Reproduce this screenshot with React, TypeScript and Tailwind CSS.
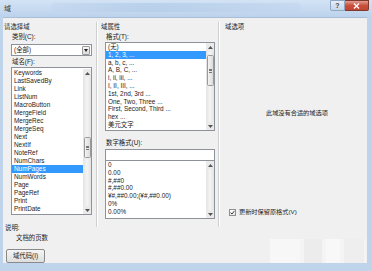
import React from "react";

const fieldNames = [
  "Keywords",
  "LastSavedBy",
  "Link",
  "ListNum",
  "MacroButton",
  "MergeField",
  "MergeRec",
  "MergeSeq",
  "Next",
  "NextIf",
  "NoteRef",
  "NumChars",
  "NumPages",
  "NumWords",
  "Page",
  "PageRef",
  "Print",
  "PrintDate",
];

const formats = [
  "(无)",
  "1, 2, 3, ...",
  "a, b, c, ...",
  "A, B, C, ...",
  "i, ii, iii, ...",
  "I, II, III, ...",
  "1st, 2nd, 3rd ...",
  "One, Two, Three ...",
  "First, Second, Third ...",
  "hex ...",
  "美元文字",
];

const numberFormats = ["0", "0.00", "#,##0", "#,##0.00", "¥#,##0.00;(¥#,##0.00)", "0%", "0.00%"];

function Arrow({ up }: { up?: boolean }) {
  return (
    <div className="flex h-[8px] items-center justify-center">
      <svg width="5" height="3" viewBox="0 0 5 3">
        {up ? <path d="M0 3 L2.5 0 L5 3 Z" fill="#555" /> : <path d="M0 0 L2.5 3 L5 0 Z" fill="#555" />}
      </svg>
    </div>
  );
}

// thin win7 style scrollbar, thumb placed by margin inside the track
function ScrollBar({ thumbTop, thumbHeight }: { thumbTop?: number; thumbHeight?: number }) {
  return (
    <div className="flex w-[8px] shrink-0 flex-col bg-[#eaeaea]">
      <Arrow up />
      <div className="flex-1 bg-[linear-gradient(90deg,#e3e3e3,#f4f4f4_50%,#e3e3e3)] px-[0.5px]">
        {thumbHeight ? (
          <div
            className="flex flex-col items-center justify-center gap-[1px] rounded-[1.5px] border border-[#9a9a9a] bg-[linear-gradient(90deg,#f3f3f3,#dcdcdc)]"
            style={{ marginTop: thumbTop, height: thumbHeight }}
          >
            <div className="h-[0.5px] w-[3px] bg-[#777]" />
            <div className="h-[0.5px] w-[3px] bg-[#777]" />
            <div className="h-[0.5px] w-[3px] bg-[#777]" />
          </div>
        ) : null}
      </div>
      <Arrow />
    </div>
  );
}

function ListBox({
  items,
  selected,
  className,
  thumbTop,
  thumbHeight,
  lineClass,
}: {
  items: string[];
  selected?: number;
  className: string;
  thumbTop?: number;
  thumbHeight?: number;
  lineClass: string;
}) {
  return (
    <div className={`flex overflow-hidden border border-[#8e939b] bg-white ${className}`}>
      <ul className="min-w-0 flex-1 overflow-hidden">
        {items.map((item, i) => (
          <li
            key={item}
            className={`${lineClass} truncate px-[2px] ${i === selected ? "bg-[#3399ff] text-white" : ""}`}
          >
            {item}
          </li>
        ))}
      </ul>
      <ScrollBar thumbTop={thumbTop} thumbHeight={thumbHeight} />
    </div>
  );
}

function Separator() {
  return <div className="mt-[4px] h-[205px] w-[2px] shrink-0 border-l border-[#cfcfcf] border-r border-r-white" />;
}

export default function App() {
  return (
    <div className="flex h-[271px] w-[372px] flex-col overflow-hidden bg-[#bfd3eb] font-['Liberation_Sans','Noto_Sans_CJK_SC',sans-serif] text-[6.4px] leading-[8px] text-[#1c1c1c]">
      {/* title bar */}
      <div className="flex h-[17px] shrink-0 items-start bg-[linear-gradient(180deg,#d3e3f5,#bcd2ec)]">
        <span className="pl-[4px] pt-[5px] text-[7px] text-[#333]">域</span>
        <div className="ml-[40px] mt-[3px] h-[9px] w-[250px] rounded-sm bg-[linear-gradient(90deg,#c3d7ef,#b2cbe8_40%,#c3d7ef)] opacity-70" />
        <div className="ml-auto mr-[3px] flex">
          <div className="flex h-[11px] w-[15px] items-center justify-center rounded-bl-[2px] border border-[#8ea7c4] bg-[linear-gradient(180deg,#e7eef7,#c5d6ea)] text-[7px] font-bold leading-none text-[#444]">
            ?
          </div>
          <div className="flex h-[11px] w-[24px] items-center justify-center rounded-br-[2px] border border-l-0 border-[#7e3a30] bg-[linear-gradient(180deg,#e3a091,#c9503c_50%,#c44530)]">
            <svg width="7" height="6" viewBox="0 0 7 6">
              <path d="M1 0.5 L6 5.5 M6 0.5 L1 5.5" stroke="#fff" strokeWidth="1.4" />
            </svg>
          </div>
        </div>
      </div>

      {/* client area */}
      <div className="ml-[3px] mr-[5px] flex h-[246px] shrink-0 flex-col border-t border-[#a8bdd6] bg-[#f0f0f0]">
        <div className="flex h-[209px] shrink-0">
          {/* left: choose field */}
          <div className="flex w-[93px] shrink-0 flex-col">
            <p className="ml-[1px] mt-[5px]">请选择域</p>
            <p className="ml-[9px] mt-[2px]">类别(C):</p>
            <div className="ml-[8px] mt-[3px] flex h-[12px] w-[81px] items-center border border-[#8e939b] bg-white">
              <span className="flex-1 pl-[2px]">(全部)</span>
              <div className="mr-[1px] flex h-[9px] w-[8px] items-center justify-center rounded-[1px] border border-[#9a9a9a] bg-[linear-gradient(180deg,#f6f6f6,#dcdcdc)]">
                <svg width="4" height="3" viewBox="0 0 4 3">
                  <path d="M0 0 L2 3 L4 0 Z" fill="#222" />
                </svg>
              </div>
            </div>
            <p className="ml-[9px] mt-[2px]">域名(F):</p>
            <ListBox
              items={fieldNames}
              selected={12}
              className="ml-[8px] mt-[1px] h-[148px] w-[81px] pt-[1px]"
              lineClass="h-[8px] leading-[8px]"
              thumbTop={60}
              thumbHeight={21}
            />
          </div>

          <Separator />

          {/* middle: field properties */}
          <div className="flex w-[120px] shrink-0 flex-col">
            <p className="ml-[3px] mt-[5px]">域属性</p>
            <p className="ml-[8px] mt-[2px]">格式(T):</p>
            <ListBox
              items={formats}
              selected={1}
              className="ml-[7px] mt-[1px] h-[89px] w-[110px]"
              lineClass="h-[7.8px] leading-[7.8px]"
              thumbTop={4}
              thumbHeight={31}
            />
            <p className="ml-[8px] mt-[8px]">数字格式(U):</p>
            <div className="ml-[7px] mt-[2px] h-[12px] w-[110px] border border-[#8e939b] bg-white" />
            <ListBox
              items={numberFormats}
              className="ml-[7px] h-[58px] w-[110px] border-t-0"
              lineClass="h-[7.8px] leading-[7.8px]"
            />
          </div>

          <Separator />

          {/* right: field options */}
          <div className="flex flex-1 flex-col">
            <p className="ml-[5px] mt-[5px]">域选项</p>
            <p className="ml-[46px] mt-[78px] text-[6.2px]">此域没有合适的域选项</p>
            <div className="ml-[9px] mt-[91px] flex items-center gap-[3px]">
              <div className="flex h-[7px] w-[7px] items-center justify-center border border-[#8f8f8f] bg-[linear-gradient(180deg,#fff,#e6e6e6)]">
                <svg width="5" height="5" viewBox="0 0 5 5">
                  <path d="M0.6 2.6 L2 4 L4.5 0.8" stroke="#2a2a2a" strokeWidth="0.9" fill="none" />
                </svg>
              </div>
              <span className="text-[6.2px]">更新时保留原格式(V)</span>
            </div>
          </div>
        </div>

        {/* bottom: description and buttons */}
        <div className="flex flex-1">
          <div className="flex w-[93px] shrink-0 flex-col">
            <p className="ml-[2px] mt-[-3px]">说明:</p>
            <p className="ml-[13px] mt-[2px]">文档的页数</p>
            <div className="ml-[3px] mt-[7px] flex h-[14px] w-[39px] items-center justify-center rounded-[2px] border border-[#8a8a8a] bg-[linear-gradient(180deg,#f5f5f5,#dedede)]">
              域代码(I)
            </div>
          </div>
          <div className="ml-auto mr-[1px] mt-[12px] flex h-[24px] w-[96px] gap-[4px] bg-[#f4f4f4]">
            <div className="w-[30px] bg-[#f7f7f7]" />
            <div className="w-[18px] bg-[#ececec]" />
            <div className="w-[14px] bg-[#f8f8f8]" />
            <div className="w-[20px] bg-[#eeeeee]" />
          </div>
        </div>
      </div>
    </div>
  );
}
